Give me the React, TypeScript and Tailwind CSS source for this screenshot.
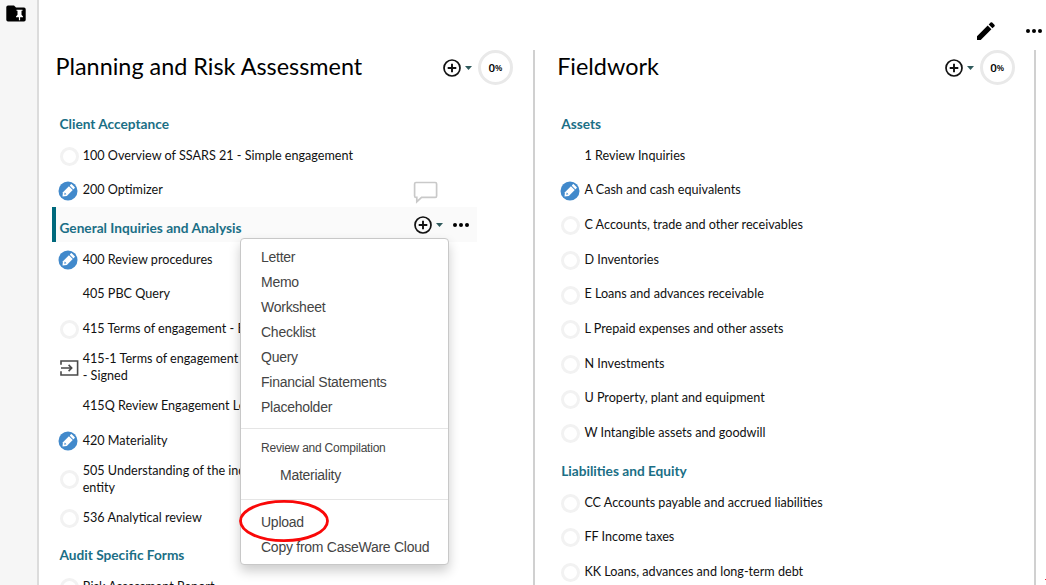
type Status = 'none' | 'empty' | 'edit' | 'import';
type Item = { heading?: boolean; active?: boolean; status?: Status; text: string; tall?: boolean; comment?: boolean };

const planning: Item[] = [
  { heading: true, text: 'Client Acceptance' },
  { status: 'empty', text: '100 Overview of SSARS 21 - Simple engagement' },
  { status: 'edit', text: '200 Optimizer', comment: true },
  { heading: true, active: true, text: 'General Inquiries and Analysis' },
  { status: 'edit', text: '400 Review procedures' },
  { status: 'none', text: '405 PBC Query' },
  { status: 'empty', text: '415 Terms of engagement - Engagement letter' },
  { status: 'import', text: '415-1 Terms of engagement\n- Signed', tall: true },
  { status: 'none', text: '415Q Review Engagement Letter' },
  { status: 'edit', text: '420 Materiality' },
  { status: 'empty', text: '505 Understanding of the industry and\nentity', tall: true },
  { status: 'empty', text: '536 Analytical review' },
  { heading: true, text: 'Audit Specific Forms' },
  { status: 'empty', text: 'Risk Assessment Report' },
];

const fieldwork: Item[] = [
  { heading: true, text: 'Assets' },
  { status: 'none', text: '1 Review Inquiries' },
  { status: 'edit', text: 'A Cash and cash equivalents' },
  { status: 'empty', text: 'C Accounts, trade and other receivables' },
  { status: 'empty', text: 'D Inventories' },
  { status: 'empty', text: 'E Loans and advances receivable' },
  { status: 'empty', text: 'L Prepaid expenses and other assets' },
  { status: 'empty', text: 'N Investments' },
  { status: 'empty', text: 'U Property, plant and equipment' },
  { status: 'empty', text: 'W Intangible assets and goodwill' },
  { heading: true, text: 'Liabilities and Equity' },
  { status: 'empty', text: 'CC Accounts payable and accrued liabilities' },
  { status: 'empty', text: 'FF Income taxes' },
  { status: 'empty', text: 'KK Loans, advances and long-term debt' },
];

function AddButton() {
  return (
    <span className="flex items-center gap-[4px]">
      <svg width="18" height="18" viewBox="0 0 18 18" fill="none" stroke="#111">
        <circle cx="9" cy="9" r="8" strokeWidth="1.7" />
        <path d="M9 4.7v8.6M4.7 9h8.6" strokeWidth="1.9" />
      </svg>
      <svg width="7" height="4" viewBox="0 0 7 4" fill="#2f5a5c">
        <path d="M0 0h7L3.5 4z" />
      </svg>
    </span>
  );
}

function Dots() {
  return (
    <svg width="16" height="4" viewBox="0 0 16 4" fill="#000">
      <circle cx="2" cy="2" r="2" />
      <circle cx="8" cy="2" r="2" />
      <circle cx="14" cy="2" r="2" />
    </svg>
  );
}

function StatusIcon({ status }: { status?: Status }) {
  if (status === 'edit')
    return (
      <svg className="mt-[2px] -ml-[1.5px]" width="20" height="20" viewBox="0 0 20 20">
        <circle cx="10" cy="10" r="9.5" fill="#4189cb" />
        <g transform="rotate(45 10 10)" fill="#fff">
          <rect x="7.3" y="2.6" width="5.4" height="2.4" rx="0.6" />
          <path d="M7.3 6h5.4v8.400l-2.700 3.400-2.700-3.400z" />
          <path d="M8.800 13.400h2.400L10 15.400z" fill="#4189cb" />
        </g>
      </svg>
    );
  if (status === 'import')
    return (
      <svg className="mt-px" width="19" height="16" viewBox="0 0 19 16" fill="none" stroke="#4a4a4a" strokeWidth="1.6">
        <path d="M1 4.8V1h16.6v14H1v-3.8" />
        <path d="M1 8h10.5M8.6 4.9L11.7 8l-3.1 3.1" />
      </svg>
    );
  if (status === 'empty') return <span className="mt-[2px] h-[19px] w-[19px] rounded-full border-[3px] border-[#f2f2f2]" />;
  return null;
}

function Row({ item }: { item: Item }) {
  if (item.heading)
    return (
      <div
        className={
          item.active
            ? 'flex h-[34.7px] shrink-0 items-center border-l-4 border-[#00697c] bg-[#fafafa] pl-1'
            : 'flex h-[34.7px] shrink-0 items-center pl-2'
        }
      >
        <span className="grow pt-[5px] text-[13.68px] font-bold leading-[17px] text-[#1b6f86]">{item.text}</span>
        {item.active && (
          <span className="flex items-center gap-[10px] pr-[8px] pt-px">
            <AddButton />
            <Dots />
          </span>
        )}
      </div>
    );
  return (
    <div className={item.tall ? 'flex h-[42.3px] shrink-0 items-center pl-2' : 'flex h-[34.7px] shrink-0 items-center pl-2'}>
      <span className="flex w-[23.2px] shrink-0">
        <StatusIcon status={item.status} />
      </span>
      <span className="grow whitespace-pre text-[12.62px] leading-[17.3px] text-[#111]">{item.text}</span>
      {item.comment && (
        <svg className="mt-[5px] mr-[39px]" width="25" height="23" viewBox="0 0 25 23" fill="none" stroke="#c9c9c9" strokeWidth="1.7">
          <path d="M3 1.5h19.2q1.4 0 1.4 1.4v12q0 1.4-1.4 1.4H8.6l-4.8 4.4v-4.4H3q-1.4 0-1.4-1.4v-12Q1.6 1.5 3 1.5z" />
        </svg>
      )}
    </div>
  );
}

function Column({ title, items }: { title: string; items: Item[] }) {
  return (
    <section className="mr-[6.2px] flex h-[535px] w-[495.5px] shrink-0 flex-col overflow-hidden border-r-2 border-[#d0d0d0] pl-[12.5px]">
      <header className="flex h-[53.3px] shrink-0 items-start pl-1">
        <h1 className="grow pt-px text-[23.4px] leading-[30px] text-black">{title}</h1>
        <div className="flex items-center gap-[6px] pr-[19.5px]">
          <AddButton />
          <span className="flex h-[35px] w-[35px] items-center justify-center rounded-full border-[3px] border-[#e9e9e9] font-['Open_Sans',sans-serif] text-[11.5px] font-semibold text-black">
            0<span className="pt-[2px] text-[8.5px]">%</span>
          </span>
        </div>
      </header>
      <div className="flex w-[425px] flex-col">
        {items.map((item) => (
          <Row key={item.text} item={item} />
        ))}
      </div>
    </section>
  );
}

const entry = 'flex h-[25.1px] items-center pl-[20px]';

function Menu() {
  return (
    <div className="absolute left-[240px] top-[238px] z-10 h-[327px] w-[209px] rounded-[4px] border border-[#c8c8c8] bg-white pt-[5.6px] font-['Liberation_Sans',Arial,sans-serif] text-[14px] tracking-[-0.26px] text-[#444] shadow-[0_6px_12px_rgba(0,0,0,0.2)]">
      <div className={entry}>Letter</div>
      <div className={entry}>Memo</div>
      <div className={entry}>Worksheet</div>
      <div className={entry}>Checklist</div>
      <div className={entry}>Query</div>
      <div className={entry}>Financial Statements</div>
      <div className={entry}>Placeholder</div>
      <div className="mt-[8px] h-px bg-[#e5e5e5]" />
      <div className="mt-[9px] flex h-[20px] items-center pl-[20px] text-[12px] tracking-[-0.22px]">Review and Compilation</div>
      <div className="mt-[5px] flex h-[25px] items-center pl-[39px]">Materiality</div>
      <div className="mt-[11px] h-px bg-[#e5e5e5]" />
      <div className="mt-[9.4px] flex h-[25px] items-center pl-[20px]">Upload</div>
      <div className="flex h-[25px] items-center pl-[20px]">Copy from CaseWare Cloud</div>
      <svg className="absolute left-[-3px] top-[260px]" width="92" height="44" viewBox="0 0 92 44" fill="none" stroke="#f90808" strokeWidth="2.8">
        <ellipse cx="46" cy="22" rx="43.5" ry="19.6" />
      </svg>
    </div>
  );
}

export default function App() {
  return (
    <div className="relative flex h-[585px] w-[1046px] overflow-hidden bg-white font-['Lato',sans-serif]">
      <aside className="w-[39px] shrink-0 border-r-2 border-[#dcdcdc] bg-[#f6f6f6] pl-[6px] pt-[5px]">
        <svg width="20" height="17" viewBox="0 0 20 17">
          <path d="M2 .5h6l2 2h8q1.7 0 1.7 1.7v10.6q0 1.7-1.7 1.7H2Q.3 16.500.3 14.800V2.200Q.3.5 2 .5z" fill="#000" />
          <path d="M10.5 4.8h6v1h-1v4l1.5 1.7v.8h-2.900v2.900h-1.200v-2.900H10v-.8l1.500-1.700v-4h-1z" fill="#fff" />
        </svg>
      </aside>
      <main className="flex min-w-0 grow flex-col">
        <div className="flex h-[50px] shrink-0 items-start justify-end gap-[31px] pr-[4px] pt-[22px]">
          <svg width="18" height="18" viewBox="0 0 18 18" fill="#000">
            <path d="M0 14.300V18h3.700L14.400 7.300 10.700 3.600zM17.400 4.400q.8-.8 0-1.600L15.200.6q-.8-.8-1.600 0l-1.900 1.900 3.700 3.700z" />
          </svg>
          <span className="flex pt-[7px]"><Dots /></span>
        </div>
        <div className="flex">
          <Column title="Planning and Risk Assessment" items={planning} />
          <Column title="Fieldwork" items={fieldwork} />
        </div>
      </main>
      <Menu />
      <span className="absolute left-[1045px] top-[579px] h-px w-px bg-[#ee2233]" />
    </div>
  );
}
